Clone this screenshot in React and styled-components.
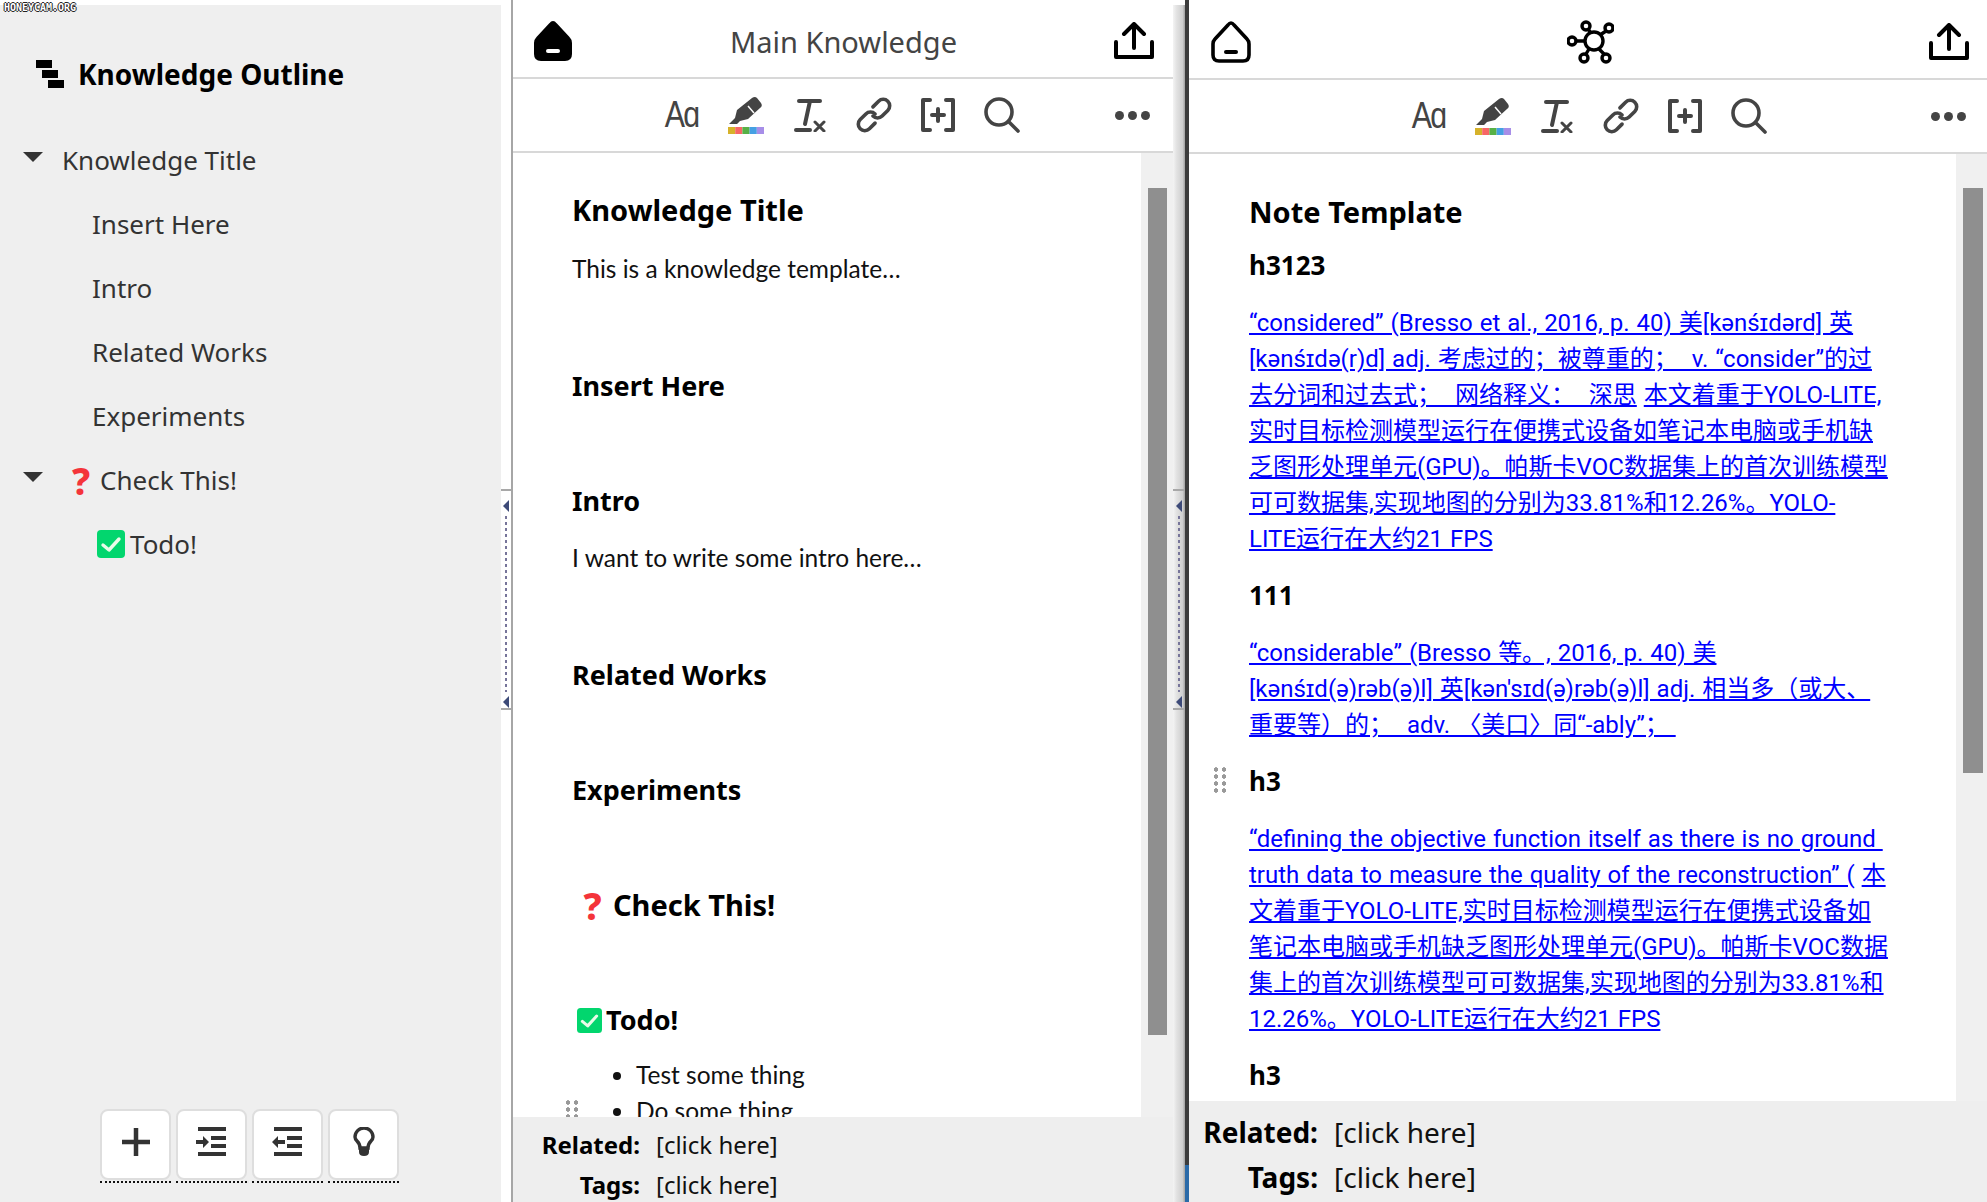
import React from 'react';
import styled, {createGlobalStyle} from 'styled-components';

const FONT = '"Noto Sans", "Noto Sans CJK SC", sans-serif';
const BODY_FONT = 'Lato, "Noto Sans CJK SC", sans-serif';
const LINK_FONT = 'Roboto, "Noto Sans CJK SC", sans-serif';

const GlobalStyle = createGlobalStyle`
  html, body { margin: 0; padding: 0; background: #fff; }
  body { font-family: ${FONT}; color: #111; }
  * { box-sizing: border-box; }
`;

const Layout = styled.div`
  position: relative;
  width: 1987px;
  height: 1202px;
  display: flex;
  overflow: hidden;
`;
const Watermark = styled.div`
  position: absolute;
  left: 4px;
  top: 2px;
  font: bold 10px "DejaVu Sans Mono", monospace;
  letter-spacing: -0.02px;
  color: #fff;
  text-shadow: 1px 0 0 #222, -1px 0 0 #222, 0 1px 0 #222, 0 -1px 0 #222;
`;

/* sidebar */
const Sidebar = styled.aside`
  width: 501px;
  margin-top: 5px;
  background: #efefef;
  display: flex;
  flex-direction: column;
`;
const OutlineTitle = styled.div`
  height: 123px;
  padding: 14px 0 0 36px;
  display: flex;
  align-items: center;
  gap: 14px;
  font-size: 28px;
  font-weight: 700;
  color: #000;
`;
const LogoBars = styled.div`
  width: 28px;
  height: 28px;
  display: flex;
  flex-direction: column;
  gap: 2px;
`;
const LogoBar = styled.div`
  width: 16px;
  height: 8px;
  background: #000;
  margin-left: ${p => p.$x}px;
`;
const Row = styled.div`
  height: 64px;
  display: flex;
  align-items: center;
  font-size: 26px;
  color: #333;
  padding-left: ${p => p.$indent}px;
`;
const Caret = styled.span`
  width: 0;
  height: 0;
  margin: 0 19px 6px 0;
  border-left: 10px solid transparent;
  border-right: 10px solid transparent;
  border-top: 10px solid #333;
`;
const Question = styled.span`
  font-weight: 800;
  color: #f4343a;
  font-size: ${p => p.$size}px;
  line-height: 1;
  width: ${p => p.$w}px;
  text-align: center;
  flex: none;
`;
const Buttons = styled.div`
  margin-top: auto;
  padding: 0 0 19px 100px;
  display: flex;
  gap: 5px;
`;
const ToolWrap = styled.div`
  width: 71px;
  padding-bottom: 1px;
  border-bottom: 2px dotted #111;
`;
const ToolButton = styled.div`
  width: 71px;
  height: 71px;
  background: #fff;
  border: 2px solid #dedede;
  border-radius: 8px;
  display: flex;
  align-items: center;
  justify-content: center;
  padding-bottom: 5px;
`;

/* splitters */
const Splitter = styled.div`
  width: ${p => p.$w}px;
  flex: none;
  margin-top: ${p => p.$top}px;
  padding-top: ${p => 489 - p.$top}px;
  display: flex;
  flex-direction: column;
  align-items: center;
  background: ${p => p.$bg};
`;
const Notch = styled.div`
  width: 100%;
  height: 2px;
  background: #a8a8a8;
`;
const SplitArrow = styled.div`
  margin-top: ${p => p.$mt}px;
  width: 0;
  height: 0;
  border-top: 6px solid transparent;
  border-bottom: 6px solid transparent;
  border-right: 6px solid #3d4a78;
`;
const SplitDots = styled.div`
  margin: 4px 0;
  height: 176px;
  width: 2px;
  background: repeating-linear-gradient(to bottom, #77759a 0 3px, transparent 3px 6px);
`;
const DarkBar = styled.div`
  width: 4px;
  flex: none;
  background: linear-gradient(to bottom, #3c3c3c 0 1165px, #2a6aa8 1165px);
`;

/* panes */
const Pane = styled.section`
  width: ${p => p.$w}px;
  flex: none;
  display: flex;
  flex-direction: column;
  height: 1202px;
  border-left: ${p => (p.$line ? '2px solid #a6a6a6' : 'none')};
  background: #fff;
`;
const PaneHeader = styled.header`
  height: ${p => p.$h}px;
  flex: none;
  display: flex;
  align-items: center;
  justify-content: space-between;
  padding: 5px ${p => p.$r}px 0 ${p => p.$l}px;
  border-bottom: 2px solid #d8d8d8;
`;
const PaneTitle = styled.div`
  font-size: 29px;
  color: #444;
`;
const Toolbar = styled.div`
  height: 74px;
  flex: none;
  display: flex;
  align-items: center;
  gap: 28px;
  padding: 0 ${p => p.$r}px 0 ${p => p.$l}px;
  border-bottom: 2px solid #d8d8d8;
  color: #444;
`;
const ToolSlot = styled.div`
  width: 36px;
  height: 40px;
  display: flex;
  align-items: center;
  justify-content: center;
`;
const FontGlyph = styled.span`
  font-size: 37px;
  line-height: 40px;
  letter-spacing: -2px;
  color: #444;
  font-family: "Liberation Sans", sans-serif;
  transform: scaleX(0.82);
`;
const More = styled.div`
  margin-left: auto;
  display: flex;
  gap: 4px;
`;
const Dot = styled.span`
  width: 9px;
  height: 9px;
  border-radius: 50%;
  background: #444;
`;
const PaneBody = styled.div`
  flex: 1;
  min-height: 0;
  display: flex;
`;
const Scroll = styled.div`
  flex: 1;
  min-width: 0;
  overflow: hidden;
  padding: ${p => p.$top}px 0 0 ${p => p.$left}px;
`;
const Track = styled.div`
  width: ${p => p.$w}px;
  flex: none;
  background: #f0f0f0;
  padding: ${p => p.$top}px 0 0 ${p => p.$left}px;
`;
const Thumb = styled.div`
  width: ${p => p.$w}px;
  height: ${p => p.$h}px;
  background: #8f8f8f;
`;
const Heading1 = styled.h1`
  margin: 0 0 ${p => p.$after}px;
  font-size: 29px;
  line-height: 40px;
  font-weight: 700;
  color: #000;
`;
const Heading2 = styled.h2`
  position: relative;
  margin: ${p => p.$before ?? 79}px 0 ${p => p.$after ?? 21}px;
  padding-left: ${p => p.$indent || 0}px;
  font-size: ${p => p.$size || 27}px;
  line-height: ${p => p.$lh || 36}px;
  font-weight: 700;
  color: #000;
  display: flex;
  align-items: center;
`;
const Heading3 = styled.h3`
  position: relative;
  margin: 0 0 21px;
  font-size: 26px;
  line-height: 36px;
  font-weight: 700;
  color: #000;
`;
const Text = styled.p`
  margin: 0;
  font-family: ${BODY_FONT};
  font-size: 24.5px;
  line-height: 36px;
  color: #111;
`;
const Para = styled.p`
  margin: 0 0 20px;
  padding-top: 1px;
  font-family: ${LINK_FONT};
  font-size: 24px;
  line-height: 36px;
  word-spacing: 1px;
  white-space: nowrap;
`;
const Anchor = styled.a`
  color: #00f;
  text-decoration: underline;
`;
const List = styled.ul`
  position: relative;
  margin: 0;
  padding: 0 0 0 64px;
  font-family: ${BODY_FONT};
  font-size: 24.5px;
  line-height: 36px;
  color: #111;
`;
const Grip = styled.div`
  position: absolute;
  left: ${p => p.$x}px;
  top: ${p => p.$y}px;
  width: 14px;
  height: 28px;
  background-image: radial-gradient(circle, #999 2px, transparent 2.4px);
  background-size: 8px 7px;
  background-position: -1px 0;
`;
const PaneFooter = styled.footer`
  height: ${p => p.$h}px;
  flex: none;
  background: #eee;
  padding-top: ${p => p.$top}px;
  display: grid;
  grid-template-columns: ${p => p.$label}px auto;
  grid-auto-rows: 36px;
  column-gap: 16px;
  row-gap: ${p => p.$gap}px;
  align-content: start;
  justify-content: start;
  font-size: ${p => p.$size}px;
  line-height: 36px;
  color: #111;
`;
const FooterLabel = styled.div`
  font-weight: 700;
  text-align: right;
  color: #000;
`;

const HomeIcon = ({filled}) => (
  <svg width="40" height="42" viewBox="0 0 40 42">
    <path
      d="M20 2 Q21.5 2 23 4 L36 18 Q38 20 38 23 V34 Q38 40 32 40 H8 Q2 40 2 34 V23 Q2 20 4 18 L17 4 Q18.5 2 20 2 Z"
      fill={filled ? '#000' : 'none'}
      stroke="#000"
      strokeWidth={filled ? 2 : 3.6}
      strokeLinejoin="round"
    />
    <rect x="13" y="29" width="14" height="4" rx="2" fill={filled ? '#fff' : '#000'}/>
  </svg>
);

const UploadIcon = () => (
  <svg width="40" height="38" viewBox="0 0 40 38" fill="none" stroke="#000" strokeWidth="4" strokeLinecap="round" strokeLinejoin="round">
    <path d="M2 20 V35 H38 V20"/>
    <path d="M20 26 V3 M10 12 L20 2 L30 12"/>
  </svg>
);

const GraphIcon = () => (
  <svg width="47" height="44" viewBox="0 0 47 44" fill="none" stroke="#000" strokeWidth="3.4">
    <circle cx="27" cy="21" r="9"/>
    <circle cx="19" cy="6" r="4"/>
    <circle cx="42" cy="8" r="4"/>
    <circle cx="5" cy="21" r="4"/>
    <circle cx="17" cy="38" r="4"/>
    <circle cx="39" cy="38" r="4"/>
    <path d="M21 9 L24 13 M39 11 L33 15 M9 21 H18 M19 34 L22 29 M37 34 L32 29"/>
  </svg>
);

const HIGHLIGHT = ['#d6b22a', '#f76666', '#57b146', '#45a0e3', '#a78ee8'];

const HighlightIcon = () => (
  <svg width="36" height="38" viewBox="0 0 36 38">
    <path d="M1 28 L7 22 L9 14 L24 2 Q27 0 29 2 L33 7 Q35 10 32 12 L20 23 L12 25 L9 28 Z" fill="#444"/>
    <path d="M20 10 L26 17" stroke="#fff" strokeWidth="1.5"/>
    {HIGHLIGHT.map((c, i) => <rect key={c} x={i * 7.2} y="31" width="7.2" height="7" fill={c}/>)}
  </svg>
);

const ClearIcon = () => (
  <svg width="32" height="34" viewBox="0 0 32 34" fill="none" stroke="#444" strokeLinecap="round">
    <path d="M5 3 H26" strokeWidth="4"/>
    <path d="M16 3 L11 26" strokeWidth="4"/>
    <path d="M2 32 H16" strokeWidth="4"/>
    <path d="M21 24 L30 33 M30 24 L21 33" strokeWidth="3"/>
  </svg>
);

const ChainIcon = () => (
  <svg width="36" height="38" viewBox="0 0 36 38" fill="none" stroke="#444" strokeWidth="3.6" strokeLinecap="round">
    <g transform="rotate(45 18 19)">
      <path d="M11.5 14 V6 a6.5 6.5 0 0 1 13 0 V14 a6.5 6.5 0 0 1 -6.5 6.5"/>
      <path d="M24.5 24 V32 a6.5 6.5 0 0 1 -13 0 V24 a6.5 6.5 0 0 1 6.5 -6.5"/>
    </g>
  </svg>
);

const BracketIcon = () => (
  <svg width="36" height="34" viewBox="0 0 36 34" fill="none" stroke="#444" strokeWidth="4" strokeLinecap="round" strokeLinejoin="round">
    <path d="M10 2 H3 V32 H10 M26 2 H33 V32 H26"/>
    <path d="M18 11 V23 M12 17 H24"/>
  </svg>
);

const SearchIcon = () => (
  <svg width="36" height="36" viewBox="0 0 36 36" fill="none" stroke="#444" strokeWidth="3.6" strokeLinecap="round">
    <circle cx="15" cy="15" r="13"/>
    <path d="M25 25 L34 34"/>
  </svg>
);

const PlusIcon = () => (
  <svg width="30" height="30" viewBox="0 0 30 30" stroke="#333" strokeWidth="4.5">
    <path d="M15 1 V29 M1 15 H29"/>
  </svg>
);

const IndentIcon = ({out}) => (
  <svg width="32" height="30" viewBox="0 0 32 30" fill="#333">
    <rect x="2" y="0" width="28" height="4"/>
    <rect x="15" y="9" width="15" height="4"/>
    <rect x="15" y="17" width="15" height="4"/>
    <rect x="2" y="25" width="28" height="4"/>
    {out
      ? <path d="M0 15 L6 9 V13 H13 V17 H6 V21 Z"/>
      : <path d="M13 15 L7 9 V13 H0 V17 H7 V21 Z"/>}
  </svg>
);

const BulbIcon = () => (
  <svg width="22" height="30" viewBox="0 0 22 30">
    <path d="M7 21 Q7 17 4 14 Q2 12 2 10 A9 9 0 1 1 20 10 Q20 12 18 14 Q15 17 15 21 Z" fill="none" stroke="#333" strokeWidth="3.4"/>
    <path d="M6 22 H16 V25 Q16 29 11 29 Q6 29 6 25 Z" fill="#333"/>
  </svg>
);

const CheckEmoji = ({size}) => (
  <svg width={size} height={size} viewBox="0 0 28 28" style={{flex: 'none'}}>
    <rect width="28" height="28" rx="4" fill="#02d66e"/>
    <path d="M6 15 L12 20 L22 9" fill="none" stroke="#e9fbe9" strokeWidth="3.4" strokeLinecap="round" strokeLinejoin="round"/>
  </svg>
);

const Tools = ({l, r}) => (
  <Toolbar $l={l} $r={r}>
    <ToolSlot><FontGlyph>Aɑ</FontGlyph></ToolSlot>
    <ToolSlot><HighlightIcon/></ToolSlot>
    <ToolSlot><ClearIcon/></ToolSlot>
    <ToolSlot><ChainIcon/></ToolSlot>
    <ToolSlot><BracketIcon/></ToolSlot>
    <ToolSlot><SearchIcon/></ToolSlot>
    <More><Dot/><Dot/><Dot/></More>
  </Toolbar>
);

const Lines = ({items}) => items.map((line, i) => (
  <React.Fragment key={i}>{line}{i < items.length - 1 && <br/>}</React.Fragment>
));

const Splits = ({w, top, bg}) => (
  <Splitter $w={w} $top={top} $bg={bg}>
    <Notch/>
    <SplitArrow $mt={9}/>
    <SplitDots/>
    <SplitArrow $mt={0}/>
    <Notch/>
  </Splitter>
);

const outline = [
  {id: 'a', text: 'Knowledge Title', caret: true, indent: 23},
  {id: 'b', text: 'Insert Here', indent: 92},
  {id: 'c', text: 'Intro', indent: 92},
  {id: 'd', text: 'Related Works', indent: 92},
  {id: 'e', text: 'Experiments', indent: 92},
];

function App() {
  return (
    <Layout>
      <GlobalStyle/>
      <Sidebar>
        <OutlineTitle>
          <LogoBars>
            <LogoBar $x={0}/>
            <LogoBar $x={6}/>
            <LogoBar $x={12}/>
          </LogoBars>
          Knowledge Outline
        </OutlineTitle>
        {outline.map(row => (
          <Row key={row.id} $indent={row.indent}>
            {row.caret && <Caret/>}
            {row.text}
          </Row>
        ))}
        <Row $indent={23}>
          <Caret/>
          <Question $size={37} $w={38}>?</Question>
          Check This!
        </Row>
        <Row $indent={97}>
          <CheckEmoji size={28}/>
          <span style={{marginLeft: 5}}>Todo!</span>
        </Row>
        <Buttons>
          <ToolWrap><ToolButton><PlusIcon/></ToolButton></ToolWrap>
          <ToolWrap><ToolButton><IndentIcon/></ToolButton></ToolWrap>
          <ToolWrap><ToolButton><IndentIcon out/></ToolButton></ToolWrap>
          <ToolWrap><ToolButton><BulbIcon/></ToolButton></ToolWrap>
        </Buttons>
      </Sidebar>
      <Splits w={10} top={0} bg="#fff"/>
      <Pane $w={662} $line>
        <PaneHeader $h={79} $l={20} $r={19}>
          <HomeIcon filled/>
          <PaneTitle>Main Knowledge</PaneTitle>
          <UploadIcon/>
        </PaneHeader>
        <Tools l={151} r={23}/>
        <PaneBody>
          <Scroll $top={37} $left={59}>
            <Heading1 $after={21}>Knowledge Title</Heading1>
            <Text>This is a knowledge template…</Text>
            <Heading2 $before={81}>Insert Here</Heading2>
            <Heading2>Intro</Heading2>
            <Text>I want to write some intro here…</Text>
            <Heading2 $before={81}>Related Works</Heading2>
            <Heading2>Experiments</Heading2>
            <Heading2 $size={29} $lh={40} $before={77}>
              <Question $size={37} $w={41}>?</Question>Check This!
            </Heading2>
            <Heading2 $before={77} $after={19} $indent={5}>
              <CheckEmoji size={25}/>
              <span style={{marginLeft: 4}}>Todo!</span>
            </Heading2>
            <List>
              <Grip $x={-7} $y={42}/>
              <li>Test some thing</li>
              <li>Do some thing</li>
            </List>
          </Scroll>
          <Track $w={32} $top={35} $left={7}><Thumb $w={19} $h={847}/></Track>
        </PaneBody>
        <PaneFooter $h={85} $top={10} $gap={4} $label={127} $size={24}>
          <FooterLabel>Related:</FooterLabel><div>[click here]</div>
          <FooterLabel>Tags:</FooterLabel><div>[click here]</div>
        </PaneFooter>
      </Pane>
      <Splits w={12} top={5} bg="linear-gradient(to right, #f4f4f4, #e2e2e2 30%, #cfcfcf 80%, #a0a0a0)"/>
      <DarkBar/>
      <Pane $w={798}>
        <PaneHeader $h={80} $l={22} $r={18}>
          <HomeIcon/>
          <GraphIcon/>
          <UploadIcon/>
        </PaneHeader>
        <Tools l={222} r={21}/>
        <PaneBody>
          <Scroll $top={38} $left={60}>
            <Heading1 $after={15}>Note Template</Heading1>
            <Heading3>h3123</Heading3>
            <Para>
              <Anchor><Lines items={[
                '“considered” (Bresso et al., 2016, p. 40) 美[kənśɪdərd] 英',
                '[kənśɪdə(r)d] adj. 考虑过的；被尊重的；\u00a0\u00a0v. “consider”的过',
                '去分词和过去式；\u00a0\u00a0网络释义：\u00a0\u00a0深思',
              ]}/></Anchor>{' '}
              <Anchor>本文着重于YOLO-LITE,</Anchor><br/>
              <Anchor><Lines items={[
                '实时目标检测模型运行在便携式设备如笔记本电脑或手机缺',
                '乏图形处理单元(GPU)。帕斯卡VOC数据集上的首次训练模型',
                '可可数据集,实现地图的分别为33.81%和12.26%。YOLO-',
                'LITE运行在大约21 FPS',
              ]}/></Anchor>
            </Para>
            <Heading3>111</Heading3>
            <Para>
              <Anchor><Lines items={[
                '“considerable” (Bresso 等。, 2016, p. 40) 美',
                '[kənśɪd(ə)rəb(ə)l] 英[kən\'sɪd(ə)rəb(ə)l] adj. 相当多（或大、',
                '重要等）的；\u00a0\u00a0adv. 〈美口〉同“-ably”；\u00a0',
              ]}/></Anchor>
            </Para>
            <Heading3>
              <Grip $x={-36} $y={3}/>
              h3
            </Heading3>
            <Para>
              <Anchor><Lines items={[
                '“defining the objective function itself as there is no ground\u00a0',
                'truth data to measure the quality of the reconstruction” (',
              ]}/></Anchor>{' '}
              <Anchor>本</Anchor><br/>
              <Anchor><Lines items={[
                '文着重于YOLO-LITE,实时目标检测模型运行在便携式设备如',
                '笔记本电脑或手机缺乏图形处理单元(GPU)。帕斯卡VOC数据',
                '集上的首次训练模型可可数据集,实现地图的分别为33.81%和',
                '12.26%。YOLO-LITE运行在大约21 FPS',
              ]}/></Anchor>
            </Para>
            <Heading3>h3</Heading3>
          </Scroll>
          <Track $w={31} $top={34} $left={7}><Thumb $w={20} $h={585}/></Track>
        </PaneBody>
        <PaneFooter $h={101} $top={13} $gap={9} $label={129} $size={28}>
          <FooterLabel>Related:</FooterLabel><div>[click here]</div>
          <FooterLabel>Tags:</FooterLabel><div>[click here]</div>
        </PaneFooter>
      </Pane>
      <Watermark>HONEYCAM.ORG</Watermark>
    </Layout>
  );
}

export default App;
